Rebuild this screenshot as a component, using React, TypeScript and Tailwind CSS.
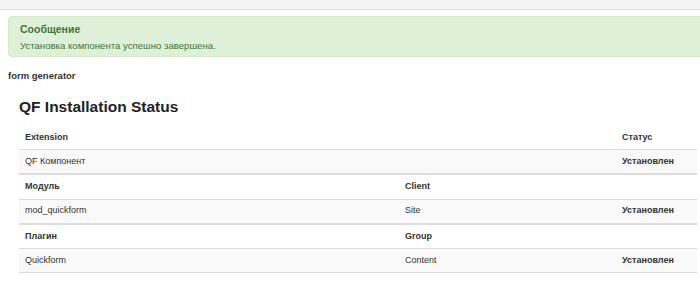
import React from 'react';

const rows = [
  { head: ['Extension', '', 'Статус'], body: ['QF Компонент', '', 'Установлен'] },
  { head: ['Модуль', 'Client', ''], body: ['mod_quickform', 'Site', 'Установлен'] },
  { head: ['Плагин', 'Group', ''], body: ['Quickform', 'Content', 'Установлен'] },
];

function Row({ cells, kind }: { cells: string[]; kind: 'head' | 'body' }) {
  const base = kind === 'head' ? 'bg-white font-bold' : 'bg-[#f9f9f9]';
  return (
    <div className={`grid grid-cols-[380px_217px_1fr] h-[24.2px] items-center border-b border-[#ddd] ${base}`}>
      <div className="px-[6px]">{cells[0]}</div>
      <div className="px-[6px]">{cells[1]}</div>
      <div className={`px-[6px] ${kind === 'body' ? 'font-bold' : ''}`}>{cells[2]}</div>
    </div>
  );
}

export default function App() {
  return (
    <div className="w-[700px] h-[283px] overflow-hidden bg-white text-[#333] font-['Liberation_Sans',Arial,sans-serif]">
      {/* top bar */}
      <div className="h-[10px] bg-[#f3f3f3] border-b border-[#e2e2e2]" />

      {/* message */}
      <div className="ml-[8px] mr-[-10px] mt-[6px] h-[41px] rounded-[4px] bg-[#dff0d8] border border-[#d6e9c6] px-[11px] pt-[5px] text-[#3c763d]">
        <div className="text-[10.5px] font-bold leading-[15px]">Сообщение</div>
        <div className="text-[9.6px] leading-[17px]">Установка компонента успешно завершена.</div>
      </div>

      <div className="ml-[8px] mt-[12px] text-[9.5px] font-bold leading-[14px]">form generator</div>

      <div className="ml-[19px] mr-[3px]">
        <h2 className="mt-[14px] text-[15.5px] font-bold leading-[20px] text-[#222]">QF Installation Status</h2>
        <div className="mt-[9px] text-[9px]">
          {rows.map((r, i) => (
            <div key={i} className={i > 0 ? 'border-t border-[#ddd]' : ''}>
              <Row cells={r.head} kind="head" />
              <Row cells={r.body} kind="body" />
            </div>
          ))}
        </div>
      </div>
    </div>
  );
}
